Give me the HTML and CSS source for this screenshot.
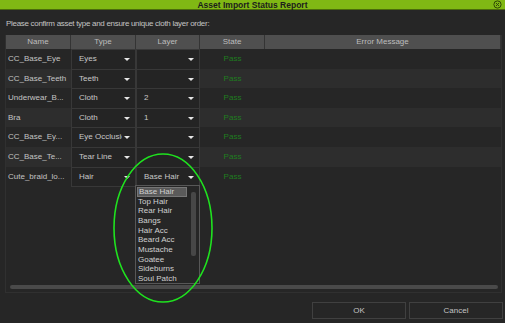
FILE: index.html
```html
<!DOCTYPE html>
<html lang="en">
<head>
    <meta charset="UTF-8">
    <title>Asset Import Status Report</title>
    <link rel="stylesheet" href="styles.css">
</head>
<body>
    <div class="dialog">
        <div class="titlebar">
            Asset Import Status Report
            <svg class="close" width="9" height="9" viewBox="0 0 9 9">
                <circle cx="4.5" cy="4.5" r="3.6" fill="none" stroke="#2f4a06" stroke-width="1"/>
                <path d="M3 3 L6 6 M6 3 L3 6" stroke="#2f4a06" stroke-width="1"/>
            </svg>
        </div>
        <p class="note">Please confirm asset type and ensure unique cloth layer order:</p>

        <div class="panel">
            <div class="grid">
                <div class="head">Name</div>
                <div class="head">Type</div>
                <div class="head">Layer</div>
                <div class="head">State</div>
                <div class="head">Error Message</div>

                <div class="cell">CC_Base_Eye</div>
                <div class="combo">Eyes<span class="arrow"></span></div>
                <div class="combo"><span class="arrow"></span></div>
                <div class="cell pass">Pass</div>
                <div class="cell"></div>

                <div class="cell alt">CC_Base_Teeth</div>
                <div class="combo">Teeth<span class="arrow"></span></div>
                <div class="combo"><span class="arrow"></span></div>
                <div class="cell alt pass">Pass</div>
                <div class="cell alt"></div>

                <div class="cell">Underwear_B...</div>
                <div class="combo">Cloth<span class="arrow"></span></div>
                <div class="combo">2<span class="arrow"></span></div>
                <div class="cell pass">Pass</div>
                <div class="cell"></div>

                <div class="cell alt">Bra</div>
                <div class="combo">Cloth<span class="arrow"></span></div>
                <div class="combo">1<span class="arrow"></span></div>
                <div class="cell alt pass">Pass</div>
                <div class="cell alt"></div>

                <div class="cell">CC_Base_Ey...</div>
                <div class="combo">Eye Occlusion<span class="arrow"></span></div>
                <div class="combo"><span class="arrow"></span></div>
                <div class="cell pass">Pass</div>
                <div class="cell"></div>

                <div class="cell alt">CC_Base_Te...</div>
                <div class="combo">Tear Line<span class="arrow"></span></div>
                <div class="combo"><span class="arrow"></span></div>
                <div class="cell alt pass">Pass</div>
                <div class="cell alt"></div>

                <div class="cell">Cute_braid_lo...</div>
                <div class="combo">Hair<span class="arrow"></span></div>
                <div class="combo open">Base Hair<span class="arrow"></span></div>
                <div class="cell pass">Pass</div>
                <div class="cell"></div>
            </div>
            <div class="hscroll"></div>

            <ul class="popup">
                <li class="selected">Base Hair</li>
                <li>Top Hair</li>
                <li>Rear Hair</li>
                <li>Bangs</li>
                <li>Hair Acc</li>
                <li>Beard Acc</li>
                <li>Mustache</li>
                <li>Goatee</li>
                <li>Sideburns</li>
                <li>Soul Patch</li>
            </ul>
            <div class="vscroll"><div class="thumb"></div></div>
        </div>

        <div class="buttons">
            <button>OK</button>
            <button>Cancel</button>
        </div>

        <svg class="ring" width="505" height="323" viewBox="0 0 505 323">
            <ellipse cx="163" cy="228" rx="49" ry="74" fill="none" stroke="#1fe21f" stroke-width="1.6"/>
        </svg>
    </div>
</body>
</html>
```

FILE: styles.css
```css
body {
    margin: 0;
    background: #262626;
    font-family: "Liberation Sans", Arial, sans-serif;
    font-size: 8px;
    color: #c4c4c4;
}
.dialog {
    position: relative;
    width: 505px;
    height: 323px;
    overflow: hidden;
}
.titlebar {
    position: relative;
    height: 9px;
    line-height: 10px;
    background: #80b814;
    border-bottom: 1px solid #4b6c0b;
    color: #1c1c1c;
    font-weight: bold;
    font-size: 8.5px;
    text-align: center;
}
.close {
    position: absolute;
    right: 3px;
    top: 0;
}
.note {
    margin: 0;
    padding: 9px 6px 0;
    height: 16px;
    line-height: 10px;
    letter-spacing: -0.3px;
}
.panel {
    position: relative;
    margin: 0 3px 0 5px;
    height: 257px;
    border: 1px solid #303030;
    border-top: none;
    display: flex;
    flex-direction: column;
}
.grid {
    display: grid;
    grid-template-columns: 65px 65px 64px 65px 1fr;
    grid-template-rows: 14px repeat(7, 19.6px);
    flex: 1;
    align-content: start;
}
.head {
    background: #4f4f4f;
    border-right: 1px solid #343434;
    text-align: center;
    line-height: 14px;
    color: #bdbdbd;
}
.head:last-child {
    border-right: none;
}
.cell {
    background: #262626;
    line-height: 19px;
    padding-left: 2px;
    white-space: nowrap;
    overflow: hidden;
}
.cell.alt {
    background: #2d2d2d;
}
.pass {
    text-align: center;
    color: #1f7d1f;
    padding-left: 0;
}
.combo {
    position: relative;
    background: #242424;
    border: 1px solid #383838;
    margin: 0 0 -1px 0;
    line-height: 18px;
    padding-left: 7px;
    white-space: nowrap;
    overflow: hidden;
    color: #c8c8c8;
}
.arrow {
    position: absolute;
    right: 3px;
    top: 0;
    width: 10px;
    height: 18px;
    background: #242424;
}
.arrow::after {
    content: "";
    position: absolute;
    left: 2px;
    top: 8px;
    border-left: 3px solid transparent;
    border-right: 3px solid transparent;
    border-top: 3px solid #e6e6e6;
}
.hscroll {
    height: 4px;
    margin: 0 3px 3px 4px;
    border-radius: 2px;
    background: #4a4a4a;
}
.popup {
    position: absolute;
    left: 129px;
    top: 150px;
    width: 62px;
    height: 96px;
    margin: 0;
    padding: 1px 0 0 1px;
    list-style: none;
    background: #262626;
    border: 1px solid #575757;
    color: #d0d0d0;
}
.popup li {
    height: 9.67px;
    line-height: 9.67px;
    padding-left: 1px;
    width: 50px;
    box-sizing: border-box;
}
.popup .selected {
    background: #5a5a5a;
    border: 1px solid #767676;
    line-height: 7.67px;
}
.vscroll {
    position: absolute;
    left: 185px;
    top: 154px;
    width: 5px;
    height: 87px;
}
.thumb {
    height: 64px;
    margin-top: 3px;
    border-radius: 2px;
    background: #474747;
}
.buttons {
    display: flex;
    justify-content: flex-end;
    gap: 3px;
    padding: 9px 2px 0 0;
}
button {
    width: 94px;
    height: 17px;
    padding: 0;
    background: #262626;
    border: 1px solid #404040;
    color: #c4c4c4;
    font-family: "Liberation Sans", Arial, sans-serif;
    font-size: 8px;
}
.ring {
    position: absolute;
    left: 0;
    top: 0;
    pointer-events: none;
}
```
